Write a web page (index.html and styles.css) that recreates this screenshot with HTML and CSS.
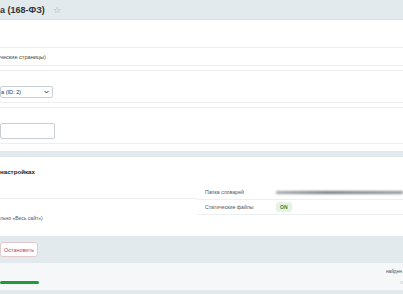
FILE: index.html
```html
<!DOCTYPE html>
<html lang="ru">
<head>
  <meta charset="UTF-8">
  <title>Настройки</title>
  <link rel="stylesheet" href="styles.css">
</head>
<body>
  <div class="title-bar">
    <h1>а (168-ФЗ)</h1>
    <span class="star">☆</span>
  </div>

  <div class="panel tabs"></div>
  <div class="panel note">ческие страницы<span class="link">)</span></div>

  <div class="panel box select-box">
    <div class="select">
      <span>а (ID: 2)</span>
      <svg width="5" height="4" viewBox="0 0 5 4"><path d="M0.5 1 L2.5 3 L4.5 1" fill="none" stroke="#333" stroke-width="0.9"/></svg>
    </div>
  </div>

  <div class="panel box input-box">
    <div class="input"></div>
  </div>

  <div class="band"></div>

  <div class="card">
    <div class="card-title">настройках</div>
    <div class="settings">
      <div class="col-left">
        <div class="cell first"></div>
        <div class="cell hint">льно «Весь сайт»)</div>
      </div>
      <div class="col-right">
        <div class="srow">
          <span class="label">Папка словарей</span>
          <span class="blurred"></span>
        </div>
        <div class="srow">
          <span class="label">Статические файлы</span>
          <span class="badge">ON</span>
        </div>
      </div>
    </div>
  </div>

  <div class="actions">
    <button class="btn-stop">Остановить</button>
  </div>

  <div class="status">найден</div>
  <div class="progress"><div class="bar" style="width: 39px"></div></div>
  <div class="band bottom"></div>
</body>
</html>
```

FILE: styles.css
```css
body {
  margin: 0;
  font-family: "Liberation Sans", Arial, sans-serif;
  background: #fff;
  color: #333;
  width: 403px;
  overflow: hidden;
}

.title-bar {
  display: flex;
  align-items: center;
  height: 19px;
  background: #e3eaed;
  border-bottom: 1px solid #d6dfe3;
}

.title-bar h1 {
  margin: 0;
  font-size: 9px;
  font-weight: bold;
  color: #333;
}

.star {
  margin-left: 8px;
  font-size: 8.5px;
  color: #9aa3a8;
}

.panel {
  border-bottom: 1px solid #eceff1;
}

.tabs {
  height: 27px;
}

.note {
  height: 17px;
  display: flex;
  align-items: center;
  font-size: 5.6px;
  color: #444;
}

.link {
  color: #2067b0;
}

.box {
  border-top: 1px solid #eceff1;
  margin-top: 4px;
}

.select-box {
  height: 31px;
}

.select {
  margin-top: 15px;
  width: 48px;
  height: 10px;
  border: 1px solid #c9d0d5;
  border-radius: 2px;
  display: flex;
  align-items: center;
  justify-content: space-between;
  padding: 0 3px 0 0;
  font-size: 5.6px;
  color: #1f3550;
}

.input-box {
  height: 35px;
}

.input {
  margin-top: 15px;
  width: 53px;
  height: 14px;
  border: 1px solid #c9d0d5;
  border-radius: 2px;
}

.band {
  height: 6px;
  margin-top: 7px;
  background: #e2eaed;
}

.card {
  height: 79px;
  background: #fff;
}

.card-title {
  height: 28px;
  display: flex;
  align-items: center;
  font-size: 6.2px;
  font-weight: bold;
  color: #222;
}

.settings {
  display: grid;
  grid-template-columns: 197px 1fr;
}

.col-left .first {
  height: 13px;
  border-bottom: 1px solid #eceff1;
}

.hint {
  margin-top: 16px;
  font-size: 5px;
  color: #555;
}

.srow {
  height: 14px;
  display: flex;
  align-items: center;
  border-bottom: 1px solid #eceff1;
  font-size: 5.2px;
  color: #555;
}

.label {
  width: 71px;
  padding-left: 8px;
}

.blurred {
  flex: 1;
  height: 3px;
  background: linear-gradient(90deg, #a3aaae, #737b80 40%, #90979c);
  filter: blur(0.8px);
  border-radius: 1px;
}

.badge {
  background: #e3f3e6;
  color: #2c8a3f;
  font-weight: bold;
  font-size: 5px;
  padding: 2px 4px;
  border-radius: 3px;
}

.actions {
  height: 27px;
  background: #e2eaed;
  display: flex;
  align-items: center;
}

.btn-stop {
  height: 15px;
  width: 38px;
  border: 1px solid #e3c9cb;
  border-radius: 3px;
  background: #fff;
  color: #cf3b43;
  font-family: inherit;
  font-size: 5.5px;
  text-align: left;
  padding: 0 0 0 3px;
}

.status {
  height: 16px;
  background: #f5f7f8;
  display: flex;
  align-items: center;
  justify-content: flex-end;
  padding-right: 1px;
  font-size: 4.8px;
  color: #555;
}

.progress {
  height: 9px;
  background: #f5f7f8;
  display: flex;
  align-items: flex-start;
  padding-top: 2px;
}

.progress .bar {
  height: 3px;
  background: #1f9a3a;
  border-radius: 2px;
  box-shadow: 400px 0 0 0 #dfe4e8;
}

.band.bottom {
  margin-top: 0;
  height: 8px;
}
```
